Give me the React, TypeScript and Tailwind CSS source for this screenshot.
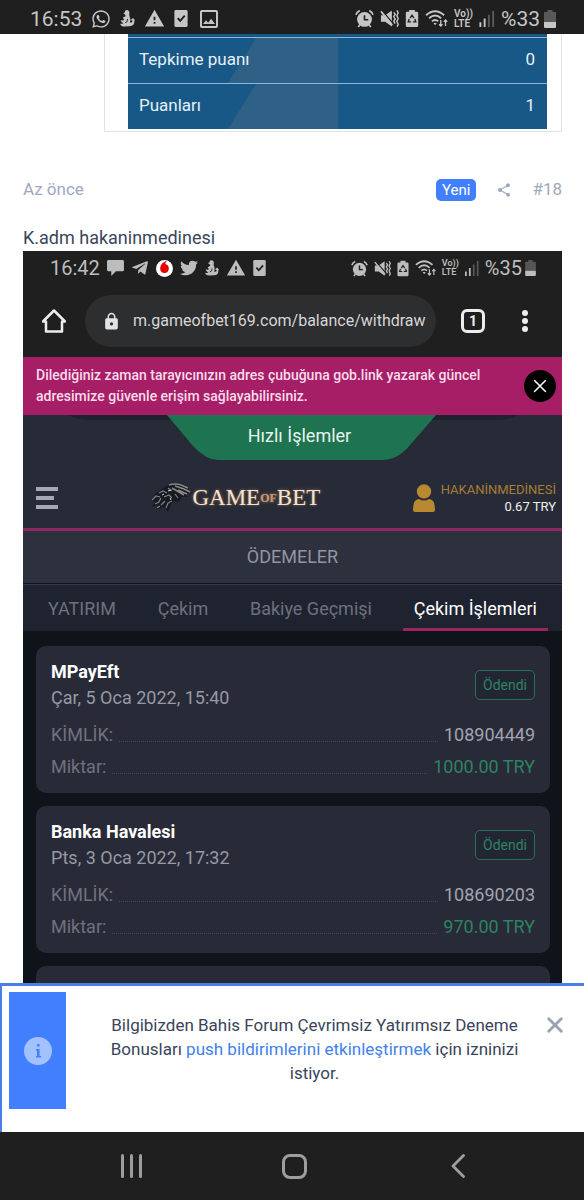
import { FaTelegramPlane, FaTwitter, FaWhatsapp } from "react-icons/fa"
import { MdLock, MdOutlineImage, MdShare, MdWarning } from "react-icons/md"

interface Payment {
  method: string
  date: string
  id: string
  amount: string
}

interface IconProps {
  className: string
}

const payments: Payment[] = [
  { method: "MPayEft", date: "Çar, 5 Oca 2022, 15:40", id: "108904449", amount: "1000.00 TRY" },
  { method: "Banka Havalesi", date: "Pts, 3 Oca 2022, 17:32", id: "108690203", amount: "970.00 TRY" },
]

const stats = [
  { label: "Tepkime puanı", value: "0" },
  { label: "Puanları", value: "1" },
]

const tabs = ["YATIRIM", "Çekim", "Bakiye Geçmişi", "Çekim İşlemleri"]

function AlarmIcon({ className }: IconProps) {
  return (
    <svg viewBox="0 0 20 20" className={className} fill="none" stroke="currentColor">
      <circle cx="10" cy="11" r="7.8" fill="currentColor" stroke="none" />
      <path d="M1 6.2Q1.8 3 5 1.7M19 6.2Q18.2 3 15 1.7M5.2 16.5L3.4 19M14.8 16.5L16.6 19" strokeWidth="1.8" />
      <path d="M10 6.5V11.3H14" stroke="#1f1f1f" strokeWidth="1.7" />
    </svg>
  )
}

function MuteIcon({ className }: IconProps) {
  return (
    <svg viewBox="0 0 20 20" className={className} fill="none" stroke="currentColor">
      <path d="M1 6.500H5.500L12.500 1.500V18.500L5.500 13.500H1Z" fill="currentColor" stroke="none" />
      <path d="M2 1.500L14 15.500" stroke="#1f1f1f" strokeWidth="1.400" />
      <path d="M1 2.500L13 17" strokeWidth="1.800" />
      <path d="M14.500 3.500L16 5.500L14.500 8L16 10.500L14.500 13L16 15.500M17.700 1.500L19.200 4L17.700 7L19.200 10L17.700 13L19.200 16L18 18.500" strokeWidth="1.500" />
    </svg>
  )
}

function SaverIcon({ className }: IconProps) {
  return (
    <svg viewBox="0 0 14 20" className={className}>
      <path d="M4 1H10V3H12Q13.5 3 13.5 4.5V17.5Q13.5 19 12 19H2Q.5 19 .5 17.5V4.5Q.5 3 2 3H4Z" fill="currentColor" />
      <path d="M5 9.5L7 6.5L9 9.5M10 10.5L11 13.5H8M6 13.5H3L4 10.5" fill="none" stroke="#1f1f1f" strokeWidth="1.4" />
    </svg>
  )
}

function WifiIcon({ className }: IconProps) {
  return (
    <svg viewBox="0 0 24 20" className={className} fill="none" stroke="currentColor" strokeWidth="2">
      <path d="M1 6.5Q10.500 -2 20 6.500M4.200 9.800Q10.500 4 16.800 9.800M7.200 13Q10.500 10 13.800 13" />
      <path d="M8.700 14.700H12.300L10.500 17Z" fill="currentColor" stroke="none" />
      <path d="M16.500 11.500V18M14.700 16L16.500 18L18.300 16M21.500 18V11.500M19.700 13.500L21.500 11.500L23.300 13.500" strokeWidth="1.400" />
    </svg>
  )
}

function SignalIcon({ className }: IconProps) {
  return (
    <svg viewBox="0 0 16 18" className={className} fill="currentColor">
      <path d="M0 13H2V18H0ZM4.500 9H6.500V18H4.500Z" />
      <path d="M9 5H11V18H9ZM13.500 1H15.500V18H13.500Z" opacity=".35" />
    </svg>
  )
}

function BatteryIcon({ className }: IconProps) {
  return (
    <svg viewBox="0 0 12 18" className={className} fill="currentColor">
      <path d="M3.500 0H8.500V2H11Q12 2 12 3V12H0V3Q0 2 1 2H3.500Z" opacity=".35" />
      <path d="M0 12H12V17Q12 18 11 18H1Q0 18 0 17Z" />
    </svg>
  )
}

function SealIcon({ className }: IconProps) {
  return (
    <svg viewBox="0 0 16 18" className={className} fill="currentColor">
      <path d="M7 0Q10.500 .2 10 3.500Q9.600 5.500 10.300 7Q12 10.500 10.500 13Q13.500 13.800 13.300 11.500L11.500 10.500L14 8.500L16 11L15.200 11.500Q16 17 10 17.300L5 17.500Q.5 17.500 .3 14.500Q2.500 15 3.500 14Q1 13 .8 10.500Q3 11.500 4.500 10.500L3 8L6 6.500L5.500 5L3.500 3.500L5 2.500Q5.300 0 7 0Z" />
      <path d="M5.500 13.500Q8.500 13 8 9.500" fill="none" stroke="#1f1f1f" strokeWidth="1" />
    </svg>
  )
}

function TaskIcon({ className }: IconProps) {
  return (
    <svg viewBox="0 0 14 18" className={className}>
      <rect width="14" height="18" rx="1.500" fill="currentColor" />
      <path d="M3.500 8.500L6.200 11.500L11 6" fill="none" stroke="#1f1f1f" strokeWidth="2" />
    </svg>
  )
}

function ChatIcon({ className }: IconProps) {
  return (
    <svg viewBox="0 0 18 17" className={className} fill="currentColor">
      <path d="M1.500 0H16.500Q18 0 18 1.500V10.500Q18 12 16.500 12H9.500L4.500 17V12H1.500Q0 12 0 10.500V1.500Q0 0 1.500 0Z" />
    </svg>
  )
}

function VodafoneIcon({ className }: IconProps) {
  return (
    <svg viewBox="0 0 18 18" className={className}>
      <circle cx="9" cy="9" r="9" fill="#fff" />
      <path d="M12 .8Q9.800 1.500 9.800 4.200Q13.800 5.500 13.600 9.300Q13 13.800 9 13.800Q4.500 13.600 4.400 9Q4.800 2.500 12 .8Z" fill="#e60000" />
    </svg>
  )
}

function CrossIcon({ className }: IconProps) {
  return (
    <svg viewBox="0 0 14 14" className={className} fill="none" stroke="currentColor" strokeLinecap="round">
      <path d="M1.500 1.500L12.500 12.500M12.500 1.500L1.500 12.500" />
    </svg>
  )
}

function Volte({ className }: IconProps) {
  return (
    <span className={`flex flex-col font-semibold ${className}`}>
      <span>Vo))</span>
      <span>LTE</span>
    </span>
  )
}

function PhoneStatus() {
  return (
    <div className="flex h-[34px] shrink-0 items-center justify-between bg-[#1f1f1f] pr-7 pl-[30px] pt-[3px] text-[#c6c6c6]">
      <div className="flex items-center gap-[9px]">
        <span className="text-[21px] leading-6">16:53</span>
        <FaWhatsapp className="size-5" />
        <SealIcon className="h-[17px] w-[15px]" />
        <MdWarning className="size-[21px]" />
        <TaskIcon className="h-[17px] w-[14px]" />
        <MdOutlineImage className="size-6" />
      </div>
      <div className="flex items-center gap-[6px]">
        <AlarmIcon className="size-[19px]" />
        <MuteIcon className="size-[19px]" />
        <SaverIcon className="h-[19px] w-[14px]" />
        <WifiIcon className="h-[19px] w-[23px]" />
        <Volte className="text-[10px] leading-[10px]" />
        <SignalIcon className="h-[17px] w-4" />
        <span className="flex items-center gap-1">
          <span className="text-[21px] leading-6">%33</span>
          <BatteryIcon className="h-[18px] w-3" />
        </span>
      </div>
    </div>
  )
}

function Stats() {
  return (
    <dl className="mr-[22px] ml-[104px] border-x border-b border-[#dfe3e8] pr-[14px] pl-[23px] pb-[2px] text-[17px] text-[#e6f0f8]">
      <div className="h-[3px] bg-[#185886]" />
      {stats.map((stat) => (
        <div
          key={stat.label}
          className="relative flex h-[46px] items-center justify-between border-t border-[#8ab8dd] bg-[#185886] pr-3 pb-[2px] pl-[11px]"
        >
          <svg viewBox="0 0 110 45" className="absolute top-0 left-[100px] h-full w-[110px]" preserveAspectRatio="none">
            <path d="M28 0H110V45H0Z" fill="#2f6186" />
          </svg>
          <dt className="relative">{stat.label}</dt>
          <dd className="relative">{stat.value}</dd>
        </div>
      ))}
    </dl>
  )
}

function ShotStatus() {
  return (
    <div className="flex h-[34px] items-center justify-between pr-[26px] pl-[27px] text-[#bdbdbd]">
      <div className="flex items-center gap-[7px]">
        <span className="text-[20px] leading-6">16:42</span>
        <ChatIcon className="h-4 w-[17px]" />
        <FaTelegramPlane className="size-[18px]" />
        <VodafoneIcon className="size-[17px]" />
        <FaTwitter className="size-[18px]" />
        <SealIcon className="h-4 w-[14px]" />
        <MdWarning className="size-5" />
        <TaskIcon className="h-4 w-[13px]" />
      </div>
      <div className="flex items-center gap-[6px]">
        <AlarmIcon className="size-[17px]" />
        <MuteIcon className="size-[17px]" />
        <SaverIcon className="h-[17px] w-3" />
        <WifiIcon className="h-[18px] w-[21px]" />
        <Volte className="text-[9px] leading-[9px]" />
        <SignalIcon className="h-4 w-[14px]" />
        <span className="flex items-center gap-[3px]">
          <span className="text-[20px] leading-6">%35</span>
          <BatteryIcon className="h-4 w-[11px]" />
        </span>
      </div>
    </div>
  )
}

function AddressBar() {
  return (
    <div className="flex h-[72px] items-center pr-[34px] pl-[19px] text-[#ededed]">
      <button aria-label="Ana sayfa">
        <svg viewBox="0 0 24 24" className="size-6" fill="none" stroke="currentColor" strokeWidth="2.500">
          <path d="M1 12.500H4V22.500H20V12.500H23L12 1.500Z" strokeLinejoin="round" />
        </svg>
      </button>
      <label className="ml-[19px] flex h-[52px] min-w-0 flex-1 items-center gap-3 rounded-full bg-[#2d2e30] pr-[10px] pl-[17px]">
        <MdLock className="size-[19px] shrink-0 text-[#e2e2e2]" />
        <input
          type="text"
          readOnly
          aria-label="Adres"
          value="m.gameofbet169.com/balance/withdraw"
          className="w-full min-w-0 bg-transparent text-[16px] text-[#d6d6d6] outline-none"
        />
      </label>
      <button
        aria-label="Sekmeler"
        className="ml-[25px] flex size-6 items-center justify-center rounded-md border-[3px] border-[#ededed] text-sm font-bold"
      >
        1
      </button>
      <button aria-label="Menü" className="ml-[37px] flex flex-col gap-[2px]">
        <span className="size-[6px] rounded-full bg-[#ededed]" />
        <span className="size-[6px] rounded-full bg-[#ededed]" />
        <span className="size-[6px] rounded-full bg-[#ededed]" />
      </button>
    </div>
  )
}

function Logo() {
  return (
    <a href="#" className="flex items-center font-['Liberation_Serif',serif] text-[#f3e3d3]">
      <svg viewBox="0 0 42 32" className="h-8 w-[42px]" fill="none">
        <path d="M1 18L5 12L11 8L16 4L22 2L29 1L34 3L40 6L36 8L41 11L36 12L38 15L32 15L29 20L24 19L21 22L18 30L14 25L6 28L9 23L2 25L5 20Z" fill="#171a20" />
        <path d="M19 3Q26 1 31 3L38 6M25 4L34 7L40 10M28 8L37 12M22 6L29 10L34 13" stroke="#8c8985" strokeWidth="1.500" />
        <path d="M2 18L6 14L10 15M5 22L9 20L11 16M9 11L13 9L17 11M14 15L19 13L22 16M11 23L15 19M16 26L18 21L22 19M18 6L22 9M25 12L28 16M7 26L10 24" stroke="#7c8386" strokeWidth="1.200" />
        <path d="M18 9L21 8M12 13L14 12M20 16L21 18" stroke="#d2d3d0" strokeWidth="1" />
      </svg>
      <span className="flex items-center text-[23px] leading-8 [text-shadow:0_0_3px_#a8774f]">
        GAME<span className="text-xs font-bold text-[#c79a74]">OF</span>BET
      </span>
    </a>
  )
}

function SiteHeader() {
  return (
    <header className="border-b-[3px] border-[#8f2860] bg-[#272b38]">
      <div className="relative flex h-[45px] items-center justify-center pb-1">
        <svg viewBox="0 0 450 45" className="absolute top-0 h-[45px] w-[450px]">
          <path d="M0 0H450Q442 5 425 5H25Q8 5 0 0Z" fill="#1f212c" />
          <path d="M99 0H368L342 30Q330 45 314 45H150Q138 45 125 31Z" fill="#1e7350" />
        </svg>
        <button className="relative ml-[14px] text-[18px] text-[#e8f5ee]">Hızlı İşlemler</button>
      </div>
      <div className="flex h-[68px] items-center justify-between pt-2 pr-[6px] pl-[13px]">
        <button aria-label="Menü" className="flex flex-col gap-[5px]">
          <span className="h-1 w-[22px] bg-[#a5a8b3]" />
          <span className="h-1 w-[18px] bg-[#a5a8b3]" />
          <span className="h-1 w-[22px] bg-[#a5a8b3]" />
        </button>
        <Logo />
        <a href="#" className="flex items-center gap-[6px]">
          <svg viewBox="0 0 22 28" className="h-7 w-[22px]" fill="#b98932">
            <circle cx="11" cy="7.500" r="7.200" />
            <path d="M0 26Q0 15 6 15Q11 18 16 15Q22 15 22 26Q22 28 20 28H2Q0 28 0 26Z" />
          </svg>
          <span className="flex flex-col text-right text-[13px] leading-[17px]">
            <span className="text-[#a87d33]">HAKANİNMEDİNESİ</span>
            <span className="text-[#eeeeee]">0.67 TRY</span>
          </span>
        </a>
      </div>
    </header>
  )
}

function Tabs() {
  return (
    <nav className="flex h-[47px] justify-between border-t border-[#343847] bg-[#1f2330] px-[14px] text-[18px]">
      {tabs.map((tab) => (
        <a
          key={tab}
          href="#"
          className={
            tab === "Çekim İşlemleri"
              ? "flex items-center border-b-[3px] border-[#9c2465] px-[11px] pt-[3px] text-white"
              : "flex items-center border-b-[3px] border-transparent px-[11px] pt-[3px] text-[#6d707d]"
          }
        >
          {tab}
        </a>
      ))}
    </nav>
  )
}

function PaymentCard({ payment }: { payment: Payment }) {
  return (
    <article className="rounded-[10px] bg-[#282b37] px-[15px] pt-[13px] pb-[10px] text-[18px]">
      <div className="flex items-center justify-between">
        <div className="leading-[26px]">
          <h3 className="font-bold text-white">{payment.method}</h3>
          <p className="text-[#9698a5]">{payment.date}</p>
        </div>
        <span className="rounded-[5px] border border-[#257458] bg-[#222632] px-[7px] text-[14px] leading-7 text-[#2c8263]">
          Ödendi
        </span>
      </div>
      <dl className="mt-2 leading-8">
        <div className="flex">
          <dt className="text-[#6f717e]">KİMLİK:</dt>
          <span className="mx-[6px] mb-[9px] flex-1 border-b border-dotted border-[#454855]" />
          <dd className="text-[#a2a4b0]">{payment.id}</dd>
        </div>
        <div className="flex">
          <dt className="text-[#6f717e]">Miktar:</dt>
          <span className="mx-[6px] mb-[9px] flex-1 border-b border-dotted border-[#454855]" />
          <dd className="text-[#2c8263]">{payment.amount}</dd>
        </div>
      </dl>
    </article>
  )
}

function Screenshot() {
  return (
    <div className="bg-[#1f1f1f]">
      <ShotStatus />
      <AddressBar />
      <div className="flex items-center justify-between bg-[#a61e66] py-2 pr-[6px] pl-[13px]">
        <p className="flex-1 pr-6 text-[14px] leading-[21px] font-medium text-[#f8dcea]">
          Dilediğiniz zaman tarayıcınızın adres çubuğuna gob.link yazarak güncel adresimize güvenle erişim
          sağlayabilirsiniz.
        </p>
        <button aria-label="Kapat" className="flex size-8 items-center justify-center rounded-full bg-black text-white">
          <CrossIcon className="size-[14px] stroke-[1.5]" />
        </button>
      </div>
      <SiteHeader />
      <h2 className="border-b border-[#10141b] bg-[#2d303d] text-center text-[18px] leading-[52px] text-[#9294a2]">
        ÖDEMELER
      </h2>
      <Tabs />
      <div className="flex flex-col gap-[13px] bg-[#0f141b] pr-3 pl-[13px] pt-[15px]">
        {payments.map((payment) => (
          <PaymentCard key={payment.id} payment={payment} />
        ))}
        <div className="h-[147px] rounded-[10px] bg-[#282b37]" />
      </div>
    </div>
  )
}

function PushNotice() {
  return (
    <aside className="flex shrink-0 border-t-[3px] border-l-2 border-[#4a80e6] bg-white pt-[6px] pb-[23px] pl-[7px]">
      <div className="flex h-[117px] w-[57px] items-center justify-center bg-[#427fff]">
        <svg viewBox="0 0 28 28" className="size-7">
          <circle cx="14" cy="14" r="14" fill="#a2c1ff" />
          <path d="M13 7H15.500V9.500H13ZM12 12H15.500V19H17V20.500H12V19H13V13.500H12Z" fill="#427fff" />
        </svg>
      </div>
      <p className="ml-5 flex-1 pt-[21px] text-center text-[17px] leading-6 text-[#39445a]">
        Bilgibizden Bahis Forum Çevrimsiz Yatırımsız Deneme Bonusları{" "}
        <a href="#" className="text-[#427fee]">
          push bildirimlerini etkinleştirmek
        </a>{" "}
        için izninizi istiyor.
      </p>
      <button aria-label="Kapat" className="w-[41px] self-start pt-[25px] pl-1 text-[#9aa3b5]">
        <CrossIcon className="size-4 stroke-[2.5]" />
      </button>
    </aside>
  )
}

function NavBar() {
  return (
    <nav className="grid h-[68px] shrink-0 grid-cols-3 place-items-center bg-[#1f1f1f] pr-[44px] pl-[50px] text-[#9e9e9e]">
      <button aria-label="Son uygulamalar" className="flex gap-[6px]">
        <span className="h-6 w-[3px] rounded-full bg-[#9e9e9e]" />
        <span className="h-6 w-[3px] rounded-full bg-[#9e9e9e]" />
        <span className="h-6 w-[3px] rounded-full bg-[#9e9e9e]" />
      </button>
      <button aria-label="Ana ekran" className="size-[25px] rounded-[8px] border-[3px] border-[#9e9e9e]" />
      <button aria-label="Geri">
        <svg viewBox="0 0 14 24" className="h-6 w-[14px]" fill="none" stroke="currentColor" strokeWidth="2.800">
          <path d="M12.500 1.500L2 12L12.500 22.500" strokeLinejoin="round" strokeLinecap="round" />
        </svg>
      </button>
    </nav>
  )
}

export default function App() {
  return (
    <div className="flex h-screen flex-col overflow-hidden bg-white font-[Roboto,sans-serif]">
      <PhoneStatus />
      <main className="min-h-0 flex-1 overflow-hidden">
        <Stats />
        <article className="mt-[46px] mr-[22px] ml-[23px]">
          <div className="flex h-6 items-center text-[17px] text-[#a0a8c0]">
            <time className="flex-1">Az önce</time>
            <span className="rounded-[5px] bg-[#427fff] px-[6px] text-[15px] leading-[22px] text-white">Yeni</span>
            <a href="#" aria-label="Paylaş" className="mx-5">
              <MdShare className="size-4" />
            </a>
            <a href="#">#18</a>
          </div>
          <p className="mt-[23px] text-[18px] leading-[26px] text-[#3a465c]">K.adm hakaninmedinesi</p>
          <Screenshot />
        </article>
      </main>
      <PushNotice />
      <NavBar />
    </div>
  )
}
